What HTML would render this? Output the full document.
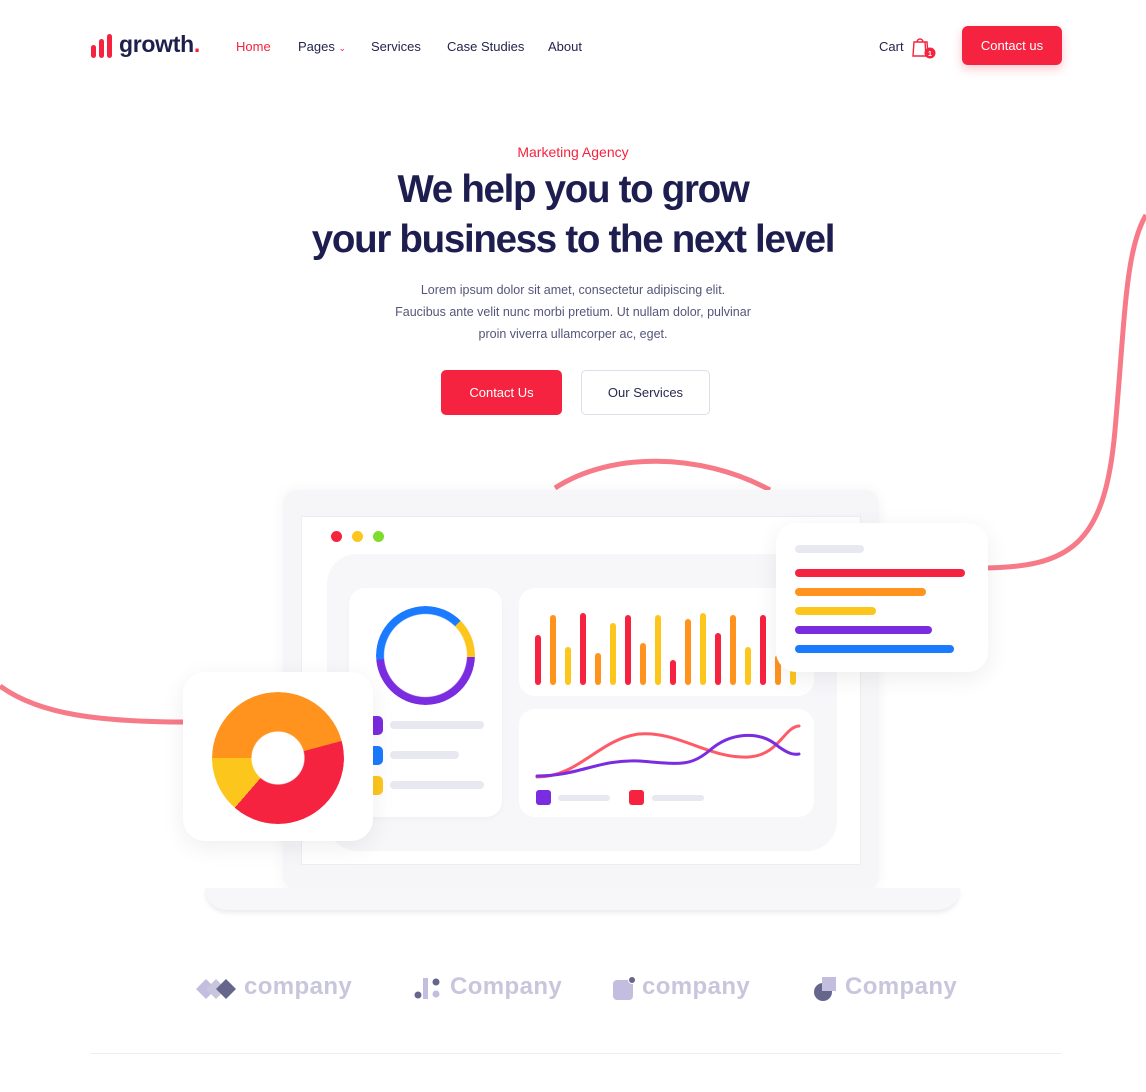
<!DOCTYPE html>
<html><head><meta charset="utf-8"><style>
*{margin:0;padding:0;box-sizing:border-box}
body{width:1146px;height:1092px;background:#fff;font-family:"Liberation Sans",sans-serif;position:relative;overflow:hidden;color:#1f1f4d}
.abs{position:absolute}
nav a{position:absolute;top:39px;font-size:13px;color:#24244e;text-decoration:none}
.h1{position:absolute;left:0;width:1146px;text-align:center;font-weight:bold;font-size:38.5px;letter-spacing:-1.3px;color:#1d1d4f}
.p{position:absolute;left:0;width:1146px;text-align:center;font-size:12.5px;color:#55557a;line-height:22px}
.card{position:absolute;background:#fff;border-radius:16px}
.bar{position:absolute;width:6px;border-radius:3px;bottom:0}
.hl{position:absolute;height:8px;border-radius:4px;left:19px}
.gl{position:absolute;height:8px;border-radius:4px;background:#e8e8f1}
.logo{position:absolute;top:973px;font-size:24px;font-weight:bold;color:#c8c6dc;letter-spacing:0.4px}
</style></head><body>
<div class="abs" style="left:91px;top:45px;width:5px;height:13px;background:#f5233f;border-radius:3px"></div>
<div class="abs" style="left:99px;top:39px;width:5px;height:19px;background:#f5233f;border-radius:3px"></div>
<div class="abs" style="left:107px;top:34px;width:5px;height:24px;background:#f5233f;border-radius:3px"></div>
<div class="abs" style="left:119px;top:31px;font-size:23px;font-weight:bold;color:#1f1f4d;letter-spacing:-0.3px">growth<span style="color:#f5233f">.</span></div>
<nav>
<a style="left:236px;color:#f5233f">Home</a>
<a style="left:298px">Pages <span style="color:#f5233f;font-size:9px">&#8964;</span></a>
<a style="left:371px">Services</a>
<a style="left:447px">Case Studies</a>
<a style="left:548px">About</a>
<a style="left:879px">Cart</a>
</nav>
<svg class="abs" style="left:911px;top:36px" width="28" height="24" viewBox="0 0 28 24"><path d="M3 6h11l1 14H2z M6 6a3 3 0 0 1 6 0 M9 6h7l1 12" fill="none" stroke="#f5233f" stroke-width="1.4"/><circle cx="19" cy="17" r="5.5" fill="#f5233f"/><text x="19" y="20" font-size="7" fill="#fff" text-anchor="middle" font-family="Liberation Sans" font-weight="bold">1</text></svg>
<div class="abs" style="left:962px;top:26px;width:100px;height:39px;background:#f5233f;border-radius:6px;color:#fff;font-size:13px;text-align:center;line-height:39px;box-shadow:0 4px 10px rgba(245,35,63,.25)">Contact us</div>
<div class="p" style="top:141px;color:#f5233f;font-size:14px">Marketing Agency</div>
<div class="h1" style="top:168px">We help you to grow</div>
<div class="h1" style="top:218px">your business to the next level</div>
<div class="p" style="top:279px">Lorem ipsum dolor sit amet, consectetur adipiscing elit.<br>Faucibus ante velit nunc morbi pretium. Ut nullam dolor, pulvinar<br>proin viverra ullamcorper ac, eget.</div>
<div class="abs" style="left:441px;top:370px;width:121px;height:45px;background:#f5233f;border-radius:5px;color:#fff;font-size:13px;text-align:center;line-height:45px">Contact Us</div>
<div class="abs" style="left:581px;top:370px;width:129px;height:45px;border:1px solid #dedee8;border-radius:5px;font-size:13px;text-align:center;line-height:43px;color:#2a2a50">Our Services</div>
<svg class="abs" style="left:0;top:0" width="1146" height="1092"><path d="M0 686 C40 715 100 722 190 722 M555 488 C610 452 700 452 770 490 M980 568 C1070 568 1105 545 1115 430 C1125 320 1125 250 1146 215" fill="none" stroke="#f77a88" stroke-width="5"/></svg>
<div class="abs" style="left:283px;top:490px;width:596px;height:400px;background:#f6f6f8;border-radius:14px;box-shadow:0 0 14px rgba(0,0,0,.05)"></div>
<div class="abs" style="left:301px;top:516px;width:560px;height:349px;background:#fff;border:1px solid #ececf1"></div>
<div class="abs" style="left:205px;top:888px;width:755px;height:22px;background:#f7f7f9;border-radius:0 0 30px 30px;box-shadow:0 3px 5px rgba(0,0,0,.08)"></div>
<div class="abs" style="left:331px;top:531px;width:11px;height:11px;border-radius:50%;background:#f5233f"></div>
<div class="abs" style="left:352px;top:531px;width:11px;height:11px;border-radius:50%;background:#fdc61d"></div>
<div class="abs" style="left:373px;top:531px;width:11px;height:11px;border-radius:50%;background:#7ddd2a"></div>
<div class="abs" style="left:327px;top:554px;width:510px;height:297px;background:#f7f7fa;border-radius:30px"></div>
<div class="card" style="left:349px;top:588px;width:153px;height:229px;box-shadow:0 2px 6px rgba(0,0,0,.03)"></div>
<div class="abs" style="left:376px;top:606px;width:99px;height:99px;border-radius:50%;background:conic-gradient(from 265deg,#1a7bff 0 140deg,#fdc61d 140deg 187deg,#7a2ce0 187deg 360deg);-webkit-mask:radial-gradient(circle,transparent 41px,#000 42px);mask:radial-gradient(circle,transparent 41px,#000 42px)"></div>
<div class="abs" style="left:369px;top:716px;width:14px;height:19px;border-radius:5px;background:#7a2ce0"></div>
<div class="abs" style="left:369px;top:746px;width:14px;height:19px;border-radius:5px;background:#1a7bff"></div>
<div class="abs" style="left:369px;top:776px;width:14px;height:19px;border-radius:5px;background:#fdc61d"></div>
<div class="gl" style="left:390px;top:721px;width:94px"></div>
<div class="gl" style="left:390px;top:751px;width:69px"></div>
<div class="gl" style="left:390px;top:781px;width:94px"></div>
<div class="card" style="left:519px;top:588px;width:295px;height:108px"></div>
<div class="abs" style="left:535px;top:604px;width:270px;height:81px">
<div class="bar" style="left:0;height:50px;background:#f5233f"></div>
<div class="bar" style="left:15px;height:70px;background:#ff931e"></div>
<div class="bar" style="left:30px;height:38px;background:#fdc61d"></div>
<div class="bar" style="left:45px;height:72px;background:#f5233f"></div>
<div class="bar" style="left:60px;height:32px;background:#ff931e"></div>
<div class="bar" style="left:75px;height:62px;background:#fdc61d"></div>
<div class="bar" style="left:90px;height:70px;background:#f5233f"></div>
<div class="bar" style="left:105px;height:42px;background:#ff931e"></div>
<div class="bar" style="left:120px;height:70px;background:#fdc61d"></div>
<div class="bar" style="left:135px;height:25px;background:#f5233f"></div>
<div class="bar" style="left:150px;height:66px;background:#ff931e"></div>
<div class="bar" style="left:165px;height:72px;background:#fdc61d"></div>
<div class="bar" style="left:180px;height:52px;background:#f5233f"></div>
<div class="bar" style="left:195px;height:70px;background:#ff931e"></div>
<div class="bar" style="left:210px;height:38px;background:#fdc61d"></div>
<div class="bar" style="left:225px;height:70px;background:#f5233f"></div>
<div class="bar" style="left:240px;height:30px;background:#ff931e"></div>
<div class="bar" style="left:255px;height:20px;background:#fdc61d"></div>
</div>
<div class="card" style="left:519px;top:709px;width:295px;height:108px"></div>
<svg class="abs" style="left:519px;top:709px" width="295" height="108"><path d="M18 68 C60 68 80 30 120 25 C160 22 190 50 230 48 C260 46 265 18 280 17" fill="none" stroke="#ff5a67" stroke-width="3" stroke-linecap="round"/><path d="M18 67 C60 67 80 50 120 52 C160 55 170 58 190 42 C210 24 240 20 260 38 C270 45 275 46 280 45" fill="none" stroke="#7a2ce0" stroke-width="3" stroke-linecap="round"/><rect x="17" y="81" width="15" height="15" rx="3" fill="#7a2ce0"/><rect x="39" y="86" width="52" height="6" rx="3" fill="#e8e8f1"/><rect x="110" y="81" width="15" height="15" rx="3" fill="#f5233f"/><rect x="133" y="86" width="52" height="6" rx="3" fill="#e8e8f1"/></svg>
<div class="card" style="left:776px;top:523px;width:212px;height:149px;border-radius:20px;box-shadow:0 6px 24px rgba(0,0,0,.07)">
<div class="hl" style="top:22px;width:69px;background:#e8e8f1"></div>
<div class="hl" style="top:46px;width:170px;background:#f5233f"></div>
<div class="hl" style="top:65px;width:131px;background:#ff931e"></div>
<div class="hl" style="top:84px;width:81px;background:#fdc61d"></div>
<div class="hl" style="top:103px;width:137px;background:#7a2ce0"></div>
<div class="hl" style="top:122px;width:159px;background:#1a7bff"></div>
</div>
<div class="card" style="left:183px;top:672px;width:190px;height:169px;border-radius:22px;box-shadow:0 6px 24px rgba(0,0,0,.07)"></div>
<div class="abs" style="left:212px;top:692px;width:132px;height:132px;border-radius:50%;background:conic-gradient(from 270deg,#ff931e 0 165deg,#f5233f 165deg 311deg,#fdc61d 311deg 360deg);-webkit-mask:radial-gradient(circle,transparent 26px,#000 27px);mask:radial-gradient(circle,transparent 26px,#000 27px)"></div>
<svg class="abs" style="left:196px;top:977px" width="42" height="24"><path d="M0 12l10-10 10 10-10 10z" fill="#c3bde0"/><path d="M10 12l10-10 10 10-10 10z" fill="#c8c6dc"/><path d="M20 12l10-10 10 10-10 10z" fill="#66668c"/></svg>
<div class="logo" style="left:244px">company</div>
<svg class="abs" style="left:414px;top:978px" width="30" height="22"><circle cx="4" cy="17" r="3.5" fill="#66668c"/><rect x="9" y="0" width="5" height="21" fill="#c3bde0"/><circle cx="22" cy="4" r="3.5" fill="#66668c"/><circle cx="22" cy="16" r="3.5" fill="#c3bde0"/></svg>
<div class="logo" style="left:450px">Company</div>
<svg class="abs" style="left:612px;top:976px" width="26" height="26"><rect x="1" y="4" width="20" height="20" rx="4" fill="#c3bde0"/><circle cx="20" cy="4" r="4" fill="#fff"/><circle cx="20" cy="4" r="3" fill="#66668c"/></svg>
<div class="logo" style="left:642px">company</div>
<svg class="abs" style="left:813px;top:976px" width="26" height="26"><ellipse cx="10" cy="16" rx="9" ry="9" fill="#66668c"/><rect x="9" y="1" width="14" height="14" fill="#c3bde0"/></svg>
<div class="logo" style="left:845px">Company</div>
<div class="abs" style="left:91px;top:1053px;width:970px;height:1px;background:#ececf1"></div>
</body></html>
